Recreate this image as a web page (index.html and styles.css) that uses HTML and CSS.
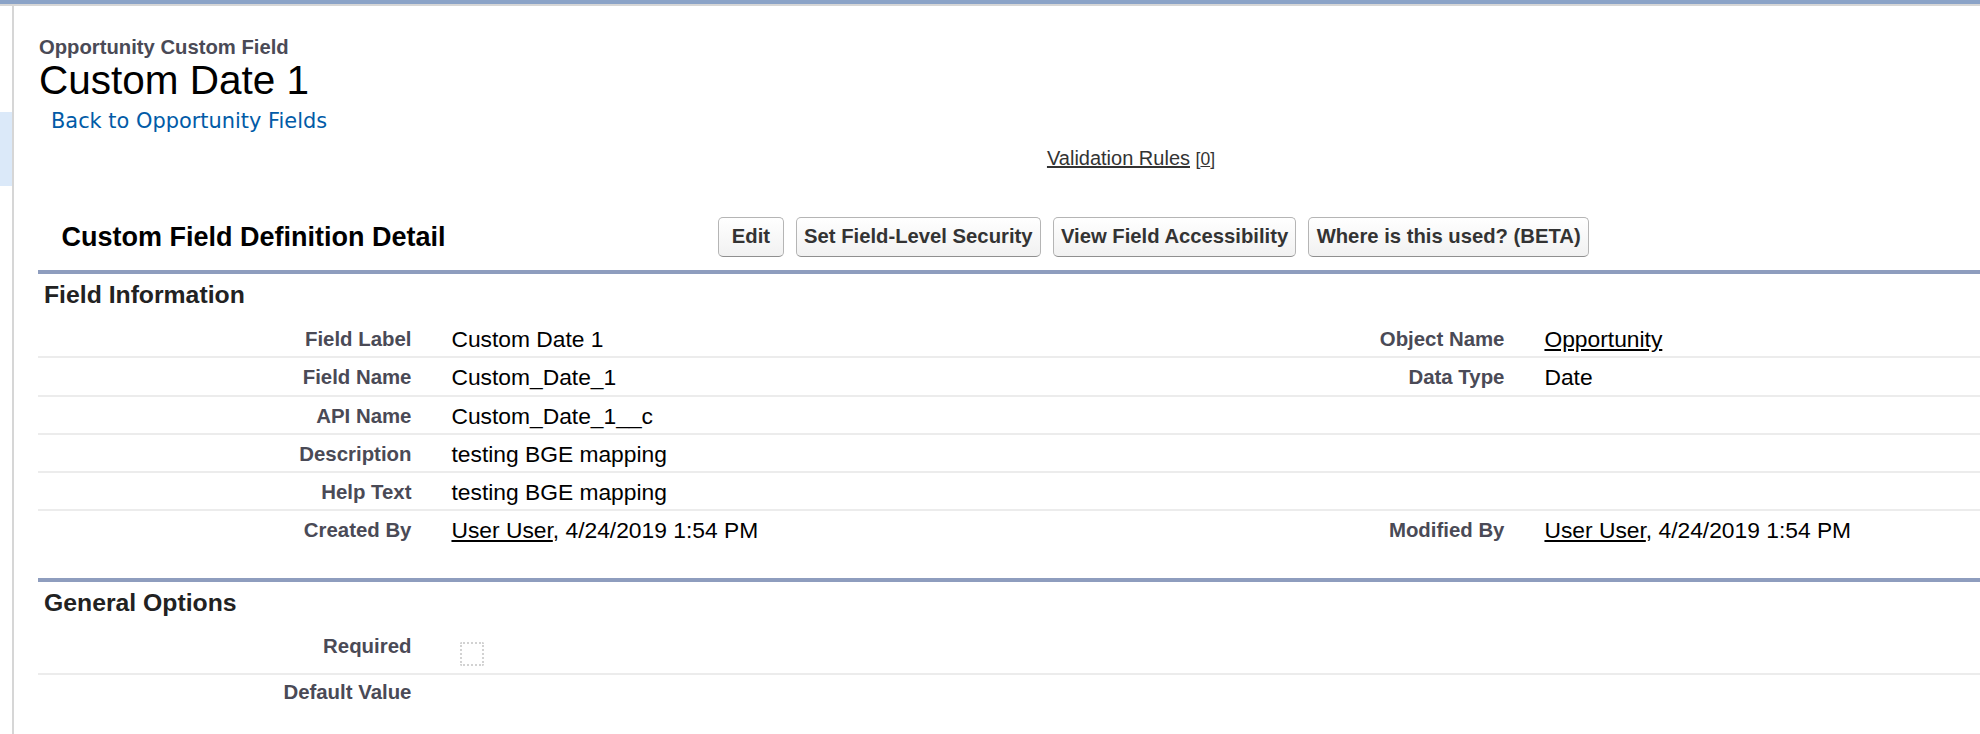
FILE: index.html
```html
<!DOCTYPE html>
<html lang="en">
<head>
<meta charset="utf-8">
<title>Custom Date 1 - Opportunity Custom Field</title>
<link rel="stylesheet" href="styles.css">
</head>
<body>
<div class="topbar"></div>
<div class="layout">
  <aside class="sidebar"><div class="sidebar-tab"></div></aside>
  <main class="page">
    <div class="page-title">
      <div class="page-type">Opportunity Custom Field</div>
      <h1 class="page-desc">Custom Date 1</h1>
      <div class="breadcrumb"><a href="#">Back to Opportunity Fields</a></div>
    </div>

    <div class="related-links">
      <a href="#" class="rl-link">Validation Rules</a> <span class="count">[<a href="#">0</a>]</span>
    </div>

    <section class="block">
      <div class="block-header">
        <h2 class="block-title">Custom Field Definition Detail</h2>
        <div class="buttons">
          <button class="btn" type="button">&nbsp;Edit&nbsp;</button>
          <button class="btn" type="button">Set Field-Level Security</button>
          <button class="btn" type="button">View Field Accessibility</button>
          <button class="btn" type="button">Where is this used? (BETA)</button>
        </div>
      </div>

      <div class="subsection first">
        <h3 class="subheader">Field Information</h3>
        <div class="row">
          <div class="label">Field Label</div>
          <div class="data">Custom Date 1</div>
          <div class="label">Object Name</div>
          <div class="data"><a href="#">Opportunity</a></div>
        </div>
        <div class="row">
          <div class="label">Field Name</div>
          <div class="data">Custom_Date_1</div>
          <div class="label">Data Type</div>
          <div class="data">Date</div>
        </div>
        <div class="row">
          <div class="label">API Name</div>
          <div class="data">Custom_Date_1__c</div>
          <div class="label"></div>
          <div class="data"></div>
        </div>
        <div class="row">
          <div class="label">Description</div>
          <div class="data">testing BGE mapping</div>
          <div class="label"></div>
          <div class="data"></div>
        </div>
        <div class="row">
          <div class="label">Help Text</div>
          <div class="data">testing BGE mapping</div>
          <div class="label"></div>
          <div class="data"></div>
        </div>
        <div class="row last">
          <div class="label">Created By</div>
          <div class="data"><a href="#">User User</a>, 4/24/2019 1:54 PM</div>
          <div class="label">Modified By</div>
          <div class="data"><a href="#">User User</a>, 4/24/2019 1:54 PM</div>
        </div>
      </div>

      <div class="subsection">
        <h3 class="subheader">General Options</h3>
        <div class="row row-check">
          <div class="label">Required</div>
          <div class="data"><div class="checkbox" role="img" aria-label="Not Checked"></div></div>
          <div class="label"></div>
          <div class="data"></div>
        </div>
        <div class="row row-open">
          <div class="label">Default Value</div>
          <div class="data"></div>
          <div class="label"></div>
          <div class="data"></div>
        </div>
      </div>
    </section>
  </main>
</div>
</body>
</html>
```

FILE: styles.css
```css
html, body {
  margin: 0;
  padding: 0;
  overflow: hidden;
  background: #fff;
}

body {
  font-family: "Liberation Sans", Arial, Helvetica, sans-serif;
  color: #000;
}

a {
  color: inherit;
  text-decoration: underline;
}

.topbar {
  height: 4px;
  background: #8ba3c7;
  border-bottom: 2px solid #d6d6d6;
}

.layout {
  display: flex;
  min-height: 728px;
}

.sidebar {
  flex: 0 0 12px;
  border-right: 2px solid #d6d6d6;
}

.sidebar-tab {
  margin-top: 106px;
  height: 74px;
  background: #dbe9f9;
}

.page {
  flex: 0 0 2234px;
  width: 2234px;
  padding-top: 29px;
}

/* page title */
.page-title {
  padding-left: 25px;
}

.page-type {
  font-size: 20.25px;
  line-height: 24px;
  font-weight: bold;
  color: #4a4a56;
}

.page-desc {
  margin: 0;
  font-size: 40.5px;
  line-height: 42px;
  font-weight: normal;
  color: #000;
}

.breadcrumb {
  margin-top: 8px;
  padding-left: 12px;
  font-family: "DejaVu Sans", Verdana, sans-serif;
  font-size: 20.9px;
  line-height: 24px;
}

.breadcrumb a {
  color: #015ba7;
  text-decoration: none;
}

/* related list links */
.related-links {
  margin-top: 14px;
  text-align: center;
  font-size: 20px;
  line-height: 22px;
  color: #333;
}

.rl-link {
  color: #333;
}

.count {
  font-size: 17.5px;
}

/* page block */
.block {
  margin: 37.5px 24px 0;
}

.block-header {
  display: flex;
  align-items: center;
  padding: 9px 0 13px;
}

.block-title {
  flex: 0 0 680px;
  box-sizing: border-box;
  margin: 0;
  padding-left: 23.5px;
  font-size: 27px;
  line-height: 32px;
  font-weight: bold;
  color: #000;
}

.buttons {
  display: flex;
  gap: 12px;
}

.btn {
  height: 40px;
  box-sizing: border-box;
  padding: 0 7.2px;
  font-family: "Liberation Sans", Arial, sans-serif;
  font-size: 20.25px;
  font-weight: bold;
  color: #333;
  background: linear-gradient(#ffffff, #f1f1f1);
  border: 1.5px solid #b5b5b5;
  border-bottom-color: #8f8f8f;
  border-radius: 5px;
  white-space: nowrap;
}

/* subsections */
.subsection {
  margin-bottom: 28.3px;
}

.subheader {
  margin: 0;
  border-top: 4px solid #8e9dbe;
  padding: 7.3px 6px 11.5px;
  font-size: 24.75px;
  line-height: 28px;
  font-weight: bold;
  color: #222;
}

.row {
  display: grid;
  grid-template-columns: 18% 32% 18% 32%;
  align-items: start;
  height: 38.2px;
  box-sizing: border-box;
  padding-top: 6px;
  border-bottom: 2px solid #ececec;
  line-height: 27px;
}

.row.last {
  border-bottom: none;
}

.label {
  padding-right: 20px;
  text-align: right;
  font-size: 20.4px;
  font-weight: bold;
  color: #4a4a56;
  white-space: nowrap;
}

.data {
  padding-left: 20px;
  font-size: 22.8px;
  color: #000;
  white-space: nowrap;
}

.row-check {
  height: 46.2px;
  padding-top: 4px;
}

.row-open {
  height: 60px;
  padding-top: 4px;
  border-bottom: none;
}

.checkbox {
  width: 24px;
  height: 24px;
  box-sizing: border-box;
  margin: 9px 0 0 8.5px;
  border: 2px dotted #d2d2d2;
  border-radius: 2px;
}
```
